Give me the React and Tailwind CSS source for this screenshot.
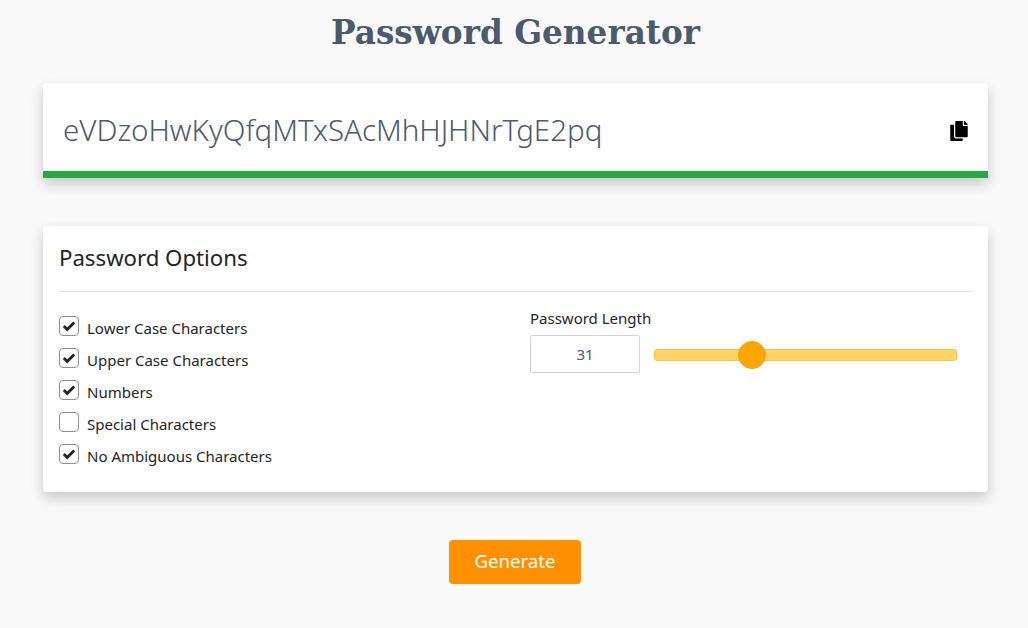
import React from 'react';
import { FaCopy } from 'react-icons/fa';

const options = [
  { label: 'Lower Case Characters', checked: true },
  { label: 'Upper Case Characters', checked: true },
  { label: 'Numbers', checked: true },
  { label: 'Special Characters', checked: false },
  { label: 'No Ambiguous Characters', checked: true },
];

const OptionRow = ({ label, checked }) => (
  <div className="flex h-8 items-center">
    <span className="mb-1 flex h-5 w-5 items-center justify-center rounded-[4px] border border-[#8f8f8f] bg-white">
      {checked && (
        <svg viewBox="0 0 16 16" className="h-4 w-4 text-[#212529]" fill="none" stroke="currentColor" strokeWidth="2.8">
          <path d="M2.8 8l3.4 3.4 7-7" />
        </svg>
      )}
    </span>
    <span className="ml-2 text-[15px] text-[#212529]">{label}</span>
  </div>
);

const App = () => {
  return (
    <div className="h-[628px] w-[1028px] overflow-hidden bg-[#f9f9f9] font-['Noto_Sans',sans-serif]">
      <div className="w-[1031px]">
        <h1 className="h-[83px] pt-[10px] text-center font-['DejaVu_Serif',serif] text-[32.7px] leading-[46px] font-bold text-[#4c5a6e]">
          Password Generator
        </h1>

        <div className="mx-[43px] flex h-[95px] flex-col rounded-t-[4px] bg-white shadow-[0_6px_14px_rgba(0,0,0,0.2)]">
          <div className="flex flex-1 items-center justify-between px-5 pt-[7px]">
            <span className="text-[29.5px] font-light text-[#4c5a6e]">eVDzoHwKyQfqMTxSAcMhHJHNrTgE2pq</span>
            <FaCopy className="h-5 w-[18px] text-black" />
          </div>
          <div className="h-[7px] bg-[#28a745]" />
        </div>

        <div className="mx-[43px] mt-12 h-[266px] rounded-[4px] bg-white px-4 shadow-[0_6px_14px_rgba(0,0,0,0.2)]">
          <h2 className="flex h-[66px] items-center border-b border-[#dedede] pb-[2px] text-[22.2px] text-[#212529]">
            Password Options
          </h2>
          <div className="flex pt-[15px]">
            <div className="w-[471px] pt-[5px]">
              {options.map((option) => (
                <OptionRow key={option.label} {...option} />
              ))}
            </div>
            <div>
              <div className="text-[15px] leading-[22px] text-[#212529]">Password Length</div>
              <div className="mt-[6px] flex items-center">
                <div className="flex h-[38px] w-[110px] items-center justify-center rounded-[2px] border border-[#cfd4da] text-[15px] text-[#4c5a6e]">
                  31
                </div>
                <div className="relative mt-[2px] ml-[14px] h-3 w-[303px] rounded-[3px] border border-[#ffc14d] bg-[#ffd466]">
                  <div className="absolute top-[-9px] left-[83px] h-7 w-7 rounded-full border border-[#f59f00] bg-[#ffa500]" />
                </div>
              </div>
            </div>
          </div>
        </div>

        <div className="mt-12 flex justify-center pr-px">
          <button className="h-11 w-[132px] rounded-[4px] bg-[#ff9000] pb-[2px] text-[18.6px] text-white">Generate</button>
        </div>
      </div>
    </div>
  );
};

export default App;
